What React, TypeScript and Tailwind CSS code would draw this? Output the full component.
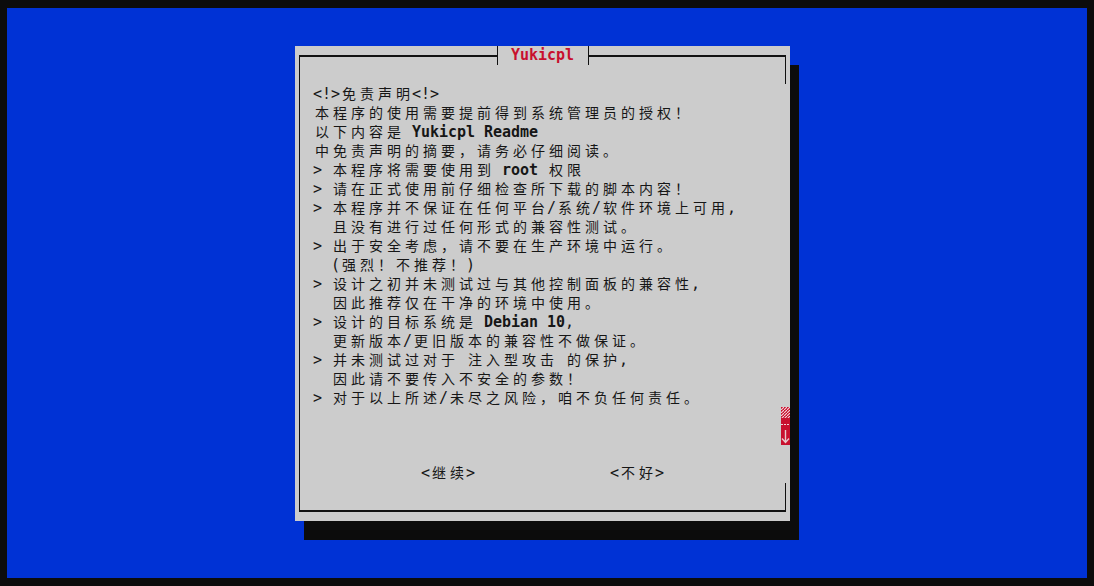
import React from "react";

type Seg = [string, boolean?];

const lines: Seg[][] = [
  [["<!>免责声明<!>"]],
  [["本程序的使用需要提前得到系统管理员的授权！"]],
  [["以下内容是 "], ["Yukicpl Readme", true]],
  [["中免责声明的摘要，请务必仔细阅读。"]],
  [["> 本程序将需要使用到 "], ["root", true], [" 权限"]],
  [["> 请在正式使用前仔细检查所下载的脚本内容！"]],
  [["> 本程序并不保证在任何平台/系统/软件环境上可用,"]],
  [["  且没有进行过任何形式的兼容性测试。"]],
  [["> 出于安全考虑，请不要在生产环境中运行。"]],
  [["  (强烈！不推荐！)"]],
  [["> 设计之初并未测试过与其他控制面板的兼容性,"]],
  [["  因此推荐仅在干净的环境中使用。"]],
  [["> 设计的目标系统是 "], ["Debian 10", true], [","]],
  [["  更新版本/更旧版本的兼容性不做保证。"]],
  [["> 并未测试过对于 注入型攻击 的保护,"]],
  [["  因此请不要传入不安全的参数！"]],
  [["> 对于以上所述/未尽之风险，咱不负任何责任。"]],
];

const isWide = (c: string) => c.charCodeAt(0) > 0x2e7f;

// one terminal cell per ascii char, two per CJK char
function Cells({ text, bold }: { text: string; bold?: boolean }) {
  return (
    <>
      {Array.from(text).map((c, i) => (
        <span
          key={i}
          className={
            (isWide(c) ? "w-[18px] text-center text-[14px] " : "w-[9px] ") +
            "inline-block shrink-0 " +
            (bold ? "font-bold" : "")
          }
        >
          {c === " " ? "\u00a0" : c}
        </span>
      ))}
    </>
  );
}

function ScrollMark() {
  return (
    <svg width="9" height="38" viewBox="0 0 9 38" className="block">
      <defs>
        <pattern id="chk" width="3" height="3" patternUnits="userSpaceOnUse">
          <rect width="3" height="3" fill="#c8102e" />
          <path d="M0 3 L3 0" stroke="#f2d6da" strokeWidth="1.1" />
        </pattern>
      </defs>
      <rect width="9" height="38" fill="#c8102e" />
      <rect width="9" height="11" fill="url(#chk)" />
      <rect x="0" y="17" width="2" height="1" fill="#f0d0d4" />
      <rect x="3" y="17" width="2" height="1" fill="#f0d0d4" />
      <rect x="6" y="17" width="2" height="1" fill="#f0d0d4" />
      <path d="M4.5 23 V35 M1 31.5 L4.5 35.5 L8 31.5" stroke="#e8c8cc" strokeWidth="1.4" fill="none" />
    </svg>
  );
}

export default function App() {
  return (
    <div className="w-[1094px] h-[586px] bg-[#0c0c0c] px-[7px] py-[8px] font-['DejaVu_Sans_Mono','Noto_Sans_CJK_SC',monospace] text-[15px]">
      <div className="w-full h-full bg-[#0032d5] pl-[288px] pt-[38px]">
        <div className="relative w-[495px] h-[475px] bg-[#cccccc] shadow-[9px_19px_0_#0c0c0c] pt-[9px] pl-[4px] pr-[4px] pb-[9px] flex flex-col text-[#161616]">
          {/* title */}
          <div className="absolute left-[202px] top-0 h-[19px] w-[92px] bg-[#cccccc] border-l border-r border-[#111111] pl-[13px] flex items-center leading-[19px] text-[#c8102e]">
            <Cells text="Yukicpl" bold />
          </div>
          {/* right border pieces */}
          <div className="absolute left-[490px] top-[9px] w-px h-[29px] bg-[#111111]" />
          <div className="absolute left-[490px] top-[437px] w-px h-[29px] bg-[#111111]" />
          {/* scroll indicator */}
          <div className="absolute left-[486px] top-[361px]">
            <ScrollMark />
          </div>

          <div className="flex-1 border-t-2 border-l border-b-2 border-[#111111] pl-[13px] pt-[28px] flex flex-col">
            {lines.map((segs, i) => (
              <div key={i} className="h-[19px] leading-[19px] flex items-center whitespace-pre">
                {segs.map((s, j) => (
                  <Cells key={j} text={s[0]} bold={s[1]} />
                ))}
              </div>
            ))}
            <div className="mt-[56px] h-[19px] leading-[19px] flex items-center pl-[108px] gap-[135px]">
              <div className="flex items-center">
                <Cells text="<继续>" />
              </div>
              <div className="flex items-center">
                <Cells text="<不好>" />
              </div>
            </div>
          </div>
        </div>
      </div>
    </div>
  );
}
